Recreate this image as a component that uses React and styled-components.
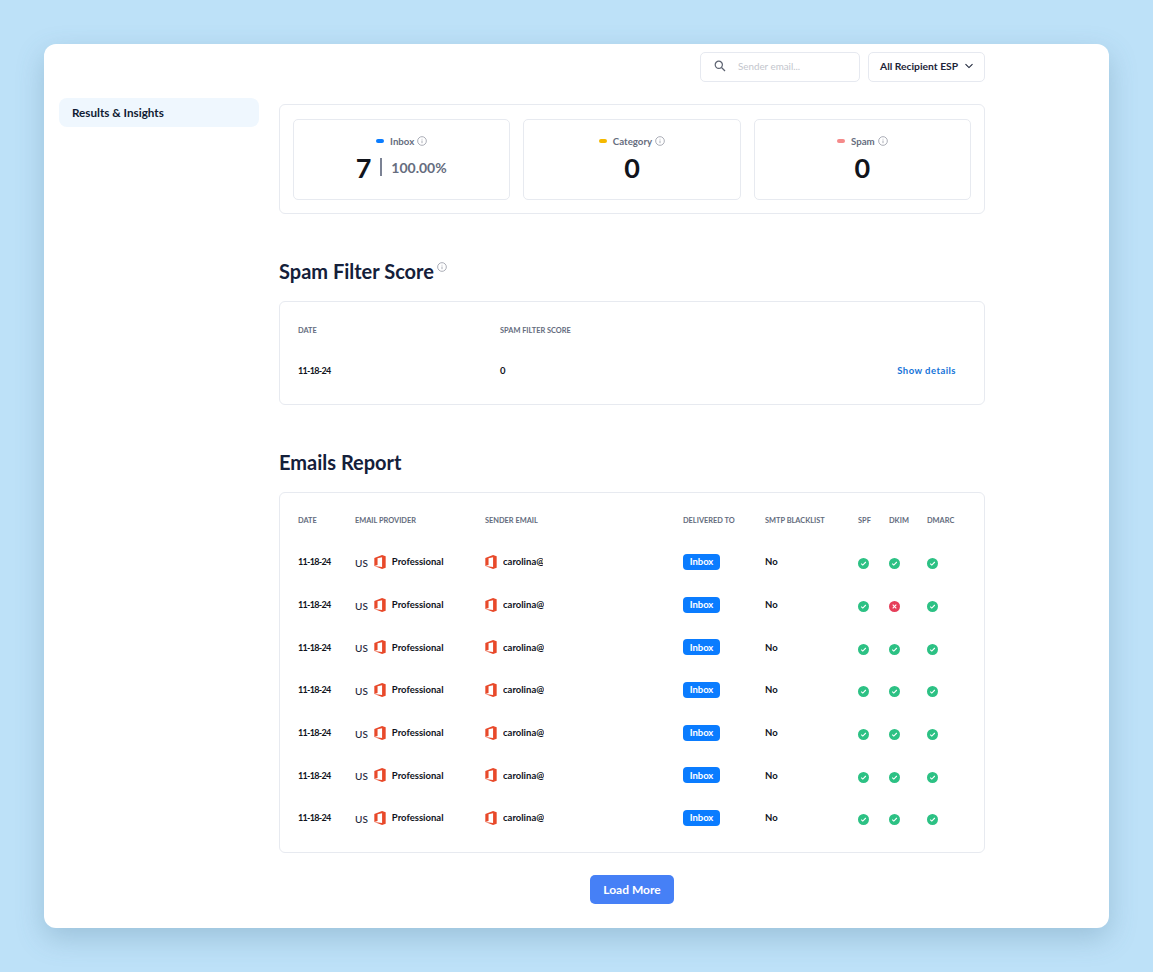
import React from "react";
import styled, { createGlobalStyle } from "styled-components";

const Global = createGlobalStyle`
  html, body { margin: 0; padding: 0; }
  body { background: #bde1f8; font-family: "Lato", "Noto Sans", sans-serif; color: #0f172a; }
`;

const Page = styled.div`
  width: 1153px; height: 972px; box-sizing: border-box; padding: 44px; overflow: hidden;
`;
const Shell = styled.div`
  width: 1065px; height: 884px; box-sizing: border-box; background: #fff; border-radius: 12px;
  box-shadow: 0 10px 28px rgba(70, 110, 140, 0.28);
  display: grid; grid-template-columns: 200px 706px; column-gap: 20px; padding: 8px 0 0 15px;
`;
const Sidebar = styled.aside`padding-top: 46px;`;
const NavItem = styled.div`
  width: 200px; height: 29px; border-radius: 8px; background: #eff7fe; box-sizing: border-box;
  padding: 0 0 2px 13px; display: flex; align-items: center; font-size: 11.7px; font-weight: 700; color: #0f1b33;
`;
const Main = styled.main`display: flex; flex-direction: column;`;
const Toolbar = styled.div`display: flex; justify-content: flex-end; gap: 8px; height: 30px; margin-bottom: 22px;`;
const Search = styled.div`
  width: 160px; box-sizing: border-box; border: 1px solid #e6e9f0; border-radius: 5px;
  display: flex; align-items: center; padding: 0 0 2px 13px; gap: 12px; color: #c3c6cd; font-size: 9.8px;
  svg { color: #5c6270; }
`;
const Select = styled.div`
  width: 117px; box-sizing: border-box; border: 1px solid #e6e9f0; border-radius: 5px;
  display: flex; align-items: center; padding: 0 0 2px 11px; gap: 6px; font-size: 10.3px; font-weight: 700; color: #1c2438;
`;
const Panel = styled.section`
  border: 1px solid #e7eaf0; border-radius: 6px; box-sizing: border-box;
`;
const StatsPanel = styled(Panel)`
  height: 110px; padding: 14px 13px; display: grid; grid-template-columns: repeat(3, 1fr); column-gap: 13px;
`;
const StatCard = styled.div`
  height: 81px; border: 1px solid #e7eaf0; border-radius: 5px; box-sizing: border-box;
  display: flex; flex-direction: column; align-items: center; padding-top: 14px;
`;
const StatLabel = styled.div`
  display: flex; align-items: center; gap: 3px; height: 14px; font-size: 9.7px; font-weight: 700; color: #666d7e;
`;
const Dot = styled.span`
  width: 8px; height: 4px; border-radius: 2px; background: ${p => p.$color}; margin-right: 3px;
`;
const StatValue = styled.div`
  display: flex; align-items: center; height: 30px; margin-top: 4px; font-size: 27px; font-weight: 700; color: #11141c;
`;
const Divider = styled.span`width: 2px; height: 18px; background: #7b8294; margin: 0 9px;`;
const Percent = styled.span`font-size: 14px; font-weight: 700; color: #666d7e; margin-right: 1px;`;
const Heading = styled.h2`
  margin: 45px 0 18px; height: 24px; line-height: 24px; font-size: 20px; font-weight: 700; color: #14203a;
  display: flex; align-items: flex-start;
  svg { margin: 3px 0 0 3px; }
`;
const ScorePanel = styled(Panel)`height: 104px; padding: 8px 18px 0;`;
const ScoreRow = styled.div`
  display: grid; grid-template-columns: 202px 1fr auto; align-items: center; height: 40px; padding-right: 10px;
`;
const ReportPanel = styled(Panel)`height: 361px; padding: 6px 0 0 18px;`;
const Row = styled.div`
  display: grid; grid-template-columns: 57px 130px 198px 82px 93px 31px 38px 40px;
  align-items: center; height: 42.67px;
`;
const HeadRow = styled(Row)`height: 41.67px; box-sizing: border-box; padding-top: 2px;`;
const Th = styled.div`font-size: 7.4px; font-weight: 700; color: #636b7d; text-transform: uppercase; white-space: nowrap;`;
const Td = styled.div`font-size: 9.5px; font-weight: 700; color: #10131c; display: flex; align-items: center; white-space: nowrap;`;
const DateCell = styled(Td)`font-size: 9px; letter-spacing: -0.7px;`;
const Country = styled.span`font-weight: 500; font-size: 10px; margin: 2px 6px 0 0; color: #1c2438;`;
const Email = styled.span`
  margin-left: 6px; display: block; overflow: hidden; max-width: ${p => p.$clip ? "40px" : "none"};
`;
const Provider = styled.span`margin-left: 6px;`;
const Badge = styled.span`
  display: inline-flex; align-items: center; justify-content: center; width: 37px; height: 16px;
  border-radius: 4px; background: #0a7cff; color: #fff; font-size: 9.5px; font-weight: 700;
`;
const Link = styled.div`font-size: 9.5px; font-weight: 700; letter-spacing: 0.45px; color: #1473d8;`;
const Footer = styled.div`display: flex; justify-content: center; margin-top: 22px;`;
const LoadMore = styled.button`
  width: 84px; height: 29px; border: 0; border-radius: 5px; background: #4680f6; color: #fff;
  font: 700 12px "Lato", sans-serif;
`;
const StatusCell = styled.div`display: flex; align-items: center; margin-top: 4px;`;

const Info = ({ size = 10 }) => (
  <svg width={size} height={size} viewBox="0 0 12 12" fill="none" stroke="#9a9ea8" strokeWidth="1">
    <circle cx="6" cy="6" r="5.2" />
    <path d="M6 5.4V8.6M6 3.4v.8" />
  </svg>
);
const Office = () => (
  <svg width="12" height="14" viewBox="1 0.6 12 14.8" style={{ flex: "none" }}>
    <path fill="#e8492a" d="M1 3.7 9.2.6 13 1.8v12.4l-3.8 1.2L1 12.3l8.2 1V2.9L4.4 4.1v7L1 12.3Z" />
  </svg>
);
const Status = ({ ok = true }) => (
  <svg width="11" height="11" viewBox="0 0 11 11">
    <circle cx="5.5" cy="5.5" r="5.5" fill={ok ? "#2cc184" : "#e63f5a"} />
    {ok
      ? <path d="M3.2 5.6 4.8 7.1 7.8 4" fill="none" stroke="#fff" strokeWidth="1.1" />
      : <path d="M3.7 3.7 7.3 7.3M7.3 3.7 3.7 7.3" fill="none" stroke="#fff" strokeWidth="1.1" />}
  </svg>
);

const rows = [
  { clip: true, dkim: true }, { dkim: false }, { dkim: true }, { dkim: true },
  { dkim: true }, { dkim: true }, { dkim: true },
];
const stats = [
  { name: "Inbox", color: "#0a7cff", value: "7", pct: "100.00%" },
  { name: "Category", color: "#f5b900", value: "0" },
  { name: "Spam", color: "#f58a8a", value: "0" },
];

export default function App() {
  return (
    <Page>
      <Global />
      <Shell>
        <Sidebar><NavItem>Results &amp; Insights</NavItem></Sidebar>
        <Main>
          <Toolbar>
            <Search>
              <svg width="12" height="12" viewBox="0 0 12 12" fill="none" stroke="currentColor" strokeWidth="1.2">
                <circle cx="4.8" cy="4.8" r="3.6" /><path d="M7.5 7.5 11 11" />
              </svg>
              Sender email...
            </Search>
            <Select>
              All Recipient ESP
              <svg width="10" height="10" viewBox="0 0 10 10" fill="none" stroke="#1c2438" strokeWidth="1.1">
                <path d="M1.5 3.2 5 6.6l3.5-3.4" />
              </svg>
            </Select>
          </Toolbar>
          <StatsPanel>
            {stats.map(s => (
              <StatCard key={s.name}>
                <StatLabel><Dot $color={s.color} />{s.name}<Info /></StatLabel>
                <StatValue>
                  {s.value}
                  {s.pct && <><Divider /><Percent>{s.pct}</Percent></>}
                </StatValue>
              </StatCard>
            ))}
          </StatsPanel>
          <Heading>Spam Filter Score<Info /></Heading>
          <ScorePanel>
            <ScoreRow>
              <Th>Date</Th><Th>Spam Filter Score</Th><span />
            </ScoreRow>
            <ScoreRow>
              <DateCell>11-18-24</DateCell><Td>0</Td><Link>Show details</Link>
            </ScoreRow>
          </ScorePanel>
          <Heading>Emails Report</Heading>
          <ReportPanel>
            <HeadRow>
              {["Date", "Email Provider", "Sender Email", "Delivered To", "SMTP Blacklist", "SPF", "DKIM", "DMARC"].map(h => <Th key={h}>{h}</Th>)}
            </HeadRow>
            {rows.map((r, i) => (
              <Row key={i}>
                <DateCell>11-18-24</DateCell>
                <Td><Country>US</Country><Office /><Provider>Professional</Provider></Td>
                <Td><Office /><Email $clip={r.clip}>carolina@</Email></Td>
                <Td><Badge>Inbox</Badge></Td>
                <Td>No</Td>
                <StatusCell><Status /></StatusCell>
                <StatusCell><Status ok={r.dkim} /></StatusCell>
                <StatusCell><Status /></StatusCell>
              </Row>
            ))}
          </ReportPanel>
          <Footer><LoadMore>Load More</LoadMore></Footer>
        </Main>
      </Shell>
    </Page>
  );
}
